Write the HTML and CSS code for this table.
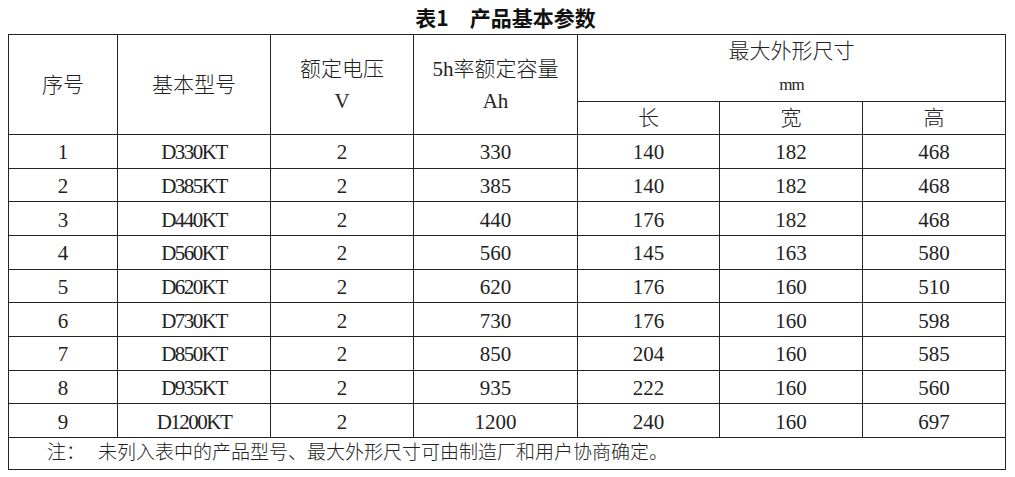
FILE: index.html
```html
<!DOCTYPE html>
<html lang="zh-CN">
<head>
<meta charset="utf-8">
<title>表1 产品基本参数</title>
<link rel="stylesheet" href="styles.css">
</head>
<body>
<div class="page">
  <div class="title">表1&emsp;产品基本参数</div>
  <table class="params">
    <colgroup>
      <col class="c-no">
      <col class="c-model">
      <col class="c-volt">
      <col class="c-cap">
      <col class="c-len">
      <col class="c-wid">
      <col class="c-hei">
    </colgroup>
    <thead>
      <tr class="h1">
        <th rowspan="2">序号</th>
        <th rowspan="2">基本型号</th>
        <th rowspan="2">额定电压<br>V</th>
        <th rowspan="2">5h率额定容量<br>Ah</th>
        <th colspan="3" class="dim">最大外形尺寸<br><span class="unit">mm</span></th>
      </tr>
      <tr class="h2">
        <th>长</th>
        <th>宽</th>
        <th>高</th>
      </tr>
    </thead>
    <tbody>
      <tr><td>1</td><td class="model">D330KT</td><td>2</td><td>330</td><td>140</td><td>182</td><td>468</td></tr>
      <tr><td>2</td><td class="model">D385KT</td><td>2</td><td>385</td><td>140</td><td>182</td><td>468</td></tr>
      <tr><td>3</td><td class="model">D440KT</td><td>2</td><td>440</td><td>176</td><td>182</td><td>468</td></tr>
      <tr><td>4</td><td class="model">D560KT</td><td>2</td><td>560</td><td>145</td><td>163</td><td>580</td></tr>
      <tr><td>5</td><td class="model">D620KT</td><td>2</td><td>620</td><td>176</td><td>160</td><td>510</td></tr>
      <tr><td>6</td><td class="model">D730KT</td><td>2</td><td>730</td><td>176</td><td>160</td><td>598</td></tr>
      <tr><td>7</td><td class="model">D850KT</td><td>2</td><td>850</td><td>204</td><td>160</td><td>585</td></tr>
      <tr><td>8</td><td class="model">D935KT</td><td>2</td><td>935</td><td>222</td><td>160</td><td>560</td></tr>
      <tr><td>9</td><td class="model">D1200KT</td><td>2</td><td>1200</td><td>240</td><td>160</td><td>697</td></tr>
      <tr class="note-row">
        <td colspan="7" class="note"><span class="note-label">注：</span>未列入表中的产品型号、最大外形尺寸可由制造厂和用户协商确定。</td>
      </tr>
    </tbody>
  </table>
</div>
</body>
</html>
```

FILE: styles.css
```css
html, body {
  margin: 0;
  padding: 0;
  background: #ffffff;
}

body {
  color: #222222;
  font-family: "Liberation Serif", "Noto Sans CJK SC", serif;
  overflow: hidden;
}

.page {
  padding: 0 10px 0 8px;
}

.title {
  height: 34px;
  line-height: 34px;
  text-align: center;
  font-family: "Noto Sans CJK SC", "Noto Sans", sans-serif;
  font-weight: 700;
  font-size: 21px;
  color: #111111;
  padding-right: 2px;
}

.params {
  border-collapse: collapse;
  table-layout: fixed;
  width: 997px;
  font-weight: 300;
}

.c-no { width: 109px; }
.c-model { width: 153px; }
.c-volt { width: 143px; }
.c-cap { width: 164px; }
.c-len { width: 142px; }
.c-wid { width: 143px; }
.c-hei { width: 143px; }

.params th,
.params td {
  border: 1px solid #222222;
  padding: 0;
  text-align: center;
  vertical-align: middle;
  font-weight: 300;
}

.params th {
  font-size: 21px;
  line-height: 32px;
}

.h1 th {
  height: 65px;
}

.h2 th {
  height: 32px;
  line-height: 30px;
}

.dim {
  line-height: 34px;
  padding-bottom: 4px;
}

.params th.dim {
  height: 61px;
}

.unit {
  font-size: 17px;
  letter-spacing: -1px;
}

.params td {
  font-size: 21px;
  line-height: 24px;
  height: 30.67px;
  padding-top: 2px;
}

.model {
  letter-spacing: -1.5px;
}

.params td.note {
  height: 31px;
  text-align: left;
  font-size: 19px;
  padding-left: 38px;
  padding-top: 0;
}

.note-label {
  margin-right: 13px;
}
```
